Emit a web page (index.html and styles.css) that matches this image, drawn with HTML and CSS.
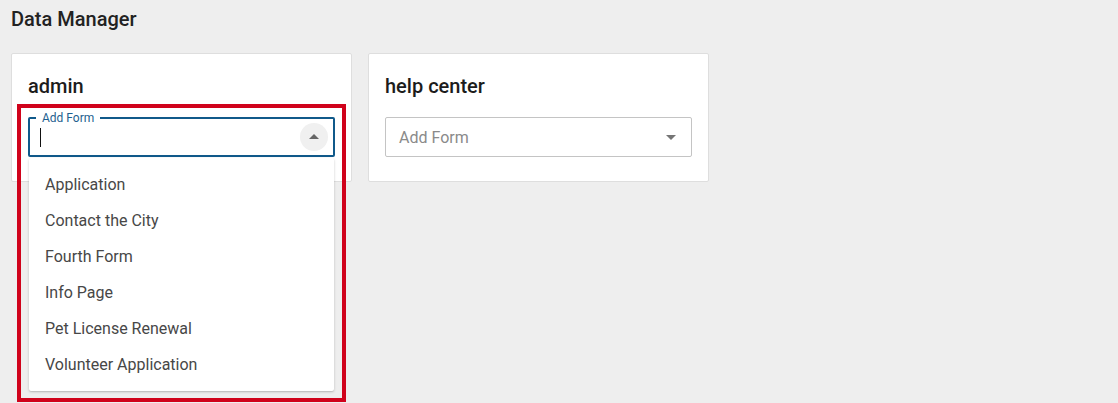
FILE: index.html
```html
<!DOCTYPE html>
<html lang="en">
<head>
<meta charset="utf-8">
<title>Data Manager</title>
<link rel="stylesheet" href="styles.css">
</head>
<body>
<div class="page">
  <h1 class="title">Data Manager</h1>
  <div class="cards">
    <section class="card">
      <h2 class="card-title">admin</h2>
      <div class="field field-focused">
        <span class="field-label">Add Form</span>
        <span class="caret"></span>
        <span class="toggle toggle-open">
          <svg width="10" height="5" viewBox="0 0 10 5"><path d="M0 5L5 0L10 5Z" fill="#666"/></svg>
        </span>
        <ul class="menu">
          <li class="menu-item">Application</li>
          <li class="menu-item">Contact the City</li>
          <li class="menu-item">Fourth Form</li>
          <li class="menu-item">Info Page</li>
          <li class="menu-item">Pet License Renewal</li>
          <li class="menu-item">Volunteer Application</li>
        </ul>
      </div>
    </section>
    <section class="card">
      <h2 class="card-title">help center</h2>
      <div class="field field-idle">
        <span class="placeholder">Add Form</span>
        <svg class="drop" width="10" height="5" viewBox="0 0 10 5"><path d="M0 0L5 5L10 0Z" fill="#757575"/></svg>
      </div>
    </section>
  </div>
  <div class="highlight"></div>
</div>
</body>
</html>
```
FILE: styles.css
```css
html, body {
  margin: 0;
  padding: 0;
  background: #eeeeee;
  font-family: Roboto, "Liberation Sans", Arial, sans-serif;
  color: #222;
}

.page {
  position: relative;
  padding: 7px 11px 0;
  height: 396px;
}

.title {
  margin: 0 0 22px;
  font-size: 20px;
  line-height: 24px;
  font-weight: 500;
  color: #222;
}

.cards {
  display: flex;
  gap: 16px;
  align-items: flex-start;
}

.card {
  width: 341px;
  box-sizing: border-box;
  background: #fff;
  border: 1px solid #dedede;
  border-radius: 2px;
  padding: 16px 16px 24px;
}

.card-title {
  margin: 0 0 15px;
  font-size: 20px;
  line-height: 32px;
  font-weight: 500;
  color: #1c1c1c;
}

.field {
  position: relative;
  height: 40px;
  box-sizing: border-box;
  display: flex;
  align-items: center;
  background: #fff;
}

.field-focused {
  border: 2px solid #10598a;
  border-radius: 2px;
}

.field-idle {
  border: 1px solid #c4c4c4;
  border-radius: 2px;
}

.field-label {
  position: absolute;
  top: -9px;
  left: 6px;
  padding: 0 6px;
  background: #fff;
  font-size: 12px;
  line-height: 16px;
  color: #1d5f8f;
}

.caret {
  width: 1px;
  height: 19px;
  margin-left: 10px;
  background: #111;
}

.toggle {
  margin-left: auto;
  margin-right: 5px;
  width: 28px;
  height: 28px;
  border-radius: 50%;
  background: #f0f0f0;
  display: flex;
  align-items: center;
  justify-content: center;
}

.toggle svg {
  display: block;
  margin-top: -1px;
}

.placeholder {
  margin-left: 13px;
  font-size: 16px;
  color: #8a8a8a;
}

.drop {
  display: block;
  margin-left: auto;
  margin-right: 15px;
  margin-top: 1px;
}

.menu {
  position: absolute;
  top: 39px;
  left: -1px;
  width: 305px;
  margin: 0;
  padding: 9px 0 8px;
  list-style: none;
  background: #fff;
  box-shadow: 0 1px 3px rgba(0, 0, 0, 0.18), 0 1px 1px rgba(0, 0, 0, 0.08);
  border-radius: 2px;
  z-index: 2;
}

.menu-item {
  height: 36px;
  line-height: 36px;
  padding-left: 16px;
  font-size: 16px;
  color: #474747;
}

.highlight {
  position: absolute;
  left: 17px;
  top: 104px;
  width: 329px;
  height: 298px;
  box-sizing: border-box;
  border: 4px solid #d0021b;
  z-index: 3;
  pointer-events: none;
}
```
